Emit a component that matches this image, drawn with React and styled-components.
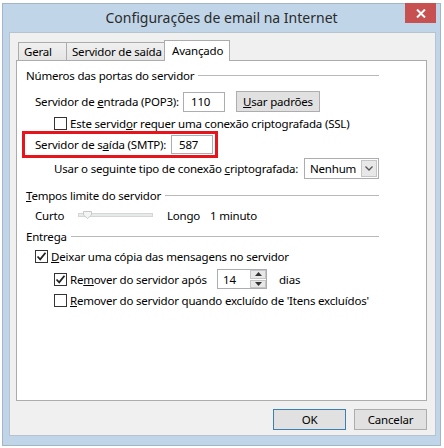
import React from 'react'
import styled, { createGlobalStyle } from 'styled-components'

const GlobalStyle = createGlobalStyle`
  body {
    margin: 0;
    background: #fff;
    font-family: "Noto Sans", "Open Sans", sans-serif;
    font-size: 11.5px;
    letter-spacing: -0.2px;
    color: #000;
  }
`

const Window = styled.div`
  box-sizing: border-box;
  margin: 3px 0 0 2px;
  width: 439px;
  height: 443px;
  background: #c1d5e8;
  border: 1px solid #a3b6c8;
  display: flex;
  flex-direction: column;
`

const TitleBar = styled.div`
  height: 28px;
  display: grid;
  grid-template-columns: 1fr auto 1fr;
  align-items: start;
`

const Title = styled.div`
  grid-column: 2;
  font-size: 14px;
  letter-spacing: 0;
  line-height: 28px;
  color: #2b2b2b;
`

const CloseBtn = styled.div`
  grid-column: 3;
  justify-self: end;
  margin: -1px 4px 0 0;
  width: 31px;
  height: 20px;
  background: #c75050;
  display: flex;
  align-items: center;
  justify-content: center;
`

const Body = styled.div`
  padding: 0 0 0 6px;
`

const Client = styled.div`
  box-sizing: border-box;
  width: 427px;
  height: 404px;
  background: #f0f0f0;
  border: 1px solid #b7c4cf;
  padding: 7px 0 0 6px;
  display: flex;
  flex-direction: column;
`

const TabStrip = styled.div`
  display: flex;
  align-items: flex-end;
  height: 21px;
  margin-bottom: -1px;
  padding-left: 2px;
  position: relative;
  z-index: 1;
`

const Tab = styled.div`
  box-sizing: border-box;
  width: ${(p) => p.$w}px;
  height: ${(p) => (p.$active ? 21 : 19)}px;
  margin-left: ${(p) => (p.$first ? 0 : -1)}px;
  border: 1px solid #acacac;
  border-bottom: ${(p) => (p.$active ? 'none' : '1px solid #acacac')};
  background: ${(p) => (p.$active ? '#fff' : 'linear-gradient(#f0f0f0, #e5e5e5)')};
  padding-left: ${(p) => (p.$active ? 7 : 5)}px;
  line-height: ${(p) => (p.$active ? 20 : 18)}px;
  white-space: nowrap;
`

const Panel = styled.div`
  box-sizing: border-box;
  width: 411px;
  height: 341px;
  background: #fff;
  border: 1px solid #acacac;
  padding: 7px 0 0 9px;
  display: flex;
  flex-direction: column;
`

const Row = styled.div`
  display: flex;
  align-items: center;
  height: ${(p) => p.$h || 14}px;
  margin-top: ${(p) => p.$mt || 0}px;
  padding-left: ${(p) => p.$indent || 0}px;
  width: ${(p) => (p.$full ? '353px' : 'auto')};
  box-sizing: border-box;
  white-space: nowrap;
`

const Header = styled.div`
  display: flex;
  align-items: center;
  width: 353px;
  height: 14px;
  margin-top: ${(p) => p.$mt || 0}px;
  white-space: nowrap;
  &::after {
    content: '';
    flex: 1;
    height: 1px;
    background: #b9b9b9;
    margin-left: 4px;
  }
`

const U = styled.span`
  text-decoration: underline;
`

const Label = styled.span`
  width: ${(p) => p.$w}px;
  flex: none;
`

const TextBox = styled.div`
  box-sizing: border-box;
  width: ${(p) => p.$w}px;
  height: ${(p) => p.$h || 20}px;
  border: 1px solid #abadb3;
  background: #fff;
  padding-left: 7px;
  display: flex;
  align-items: center;
  flex: none;
`

const Button = styled.div`
  box-sizing: border-box;
  width: ${(p) => p.$w}px;
  height: 21px;
  border: 1px solid ${(p) => (p.$default ? '#3c7fb1' : '#adadad')};
  background: #e1e1e1;
  display: flex;
  align-items: center;
  justify-content: center;
  margin-left: ${(p) => p.$ml || 0}px;
`

const Box = styled.span`
  box-sizing: border-box;
  width: 13px;
  height: 13px;
  border: 1px solid #333;
  background: #fff;
  margin-right: 3px;
  flex: none;
  display: flex;
  align-items: center;
  justify-content: center;
`

const RedFrame = styled.div`
  box-sizing: border-box;
  width: 196px;
  height: 27px;
  margin: 1px 0 0 -4px;
  border: 3px solid #e8141c;
  padding: 0 3px 0 10px;
  display: flex;
  align-items: center;
  white-space: nowrap;
`

const Select = styled.div`
  box-sizing: border-box;
  width: 75px;
  height: 21px;
  margin-left: auto;
  border: 1px solid #abadb3;
  background: #fff;
  display: flex;
  align-items: center;
  padding: 0 1px 0 5px;
`

const DropBtn = styled.div`
  box-sizing: border-box;
  margin-left: auto;
  width: 16px;
  height: 17px;
  border: 1px solid #c5c5c5;
  background: #e8e8e8;
  display: flex;
  align-items: center;
  justify-content: center;
`

const Track = styled.div`
  position: relative;
  box-sizing: border-box;
  width: 75px;
  height: 4px;
  margin: 0 14px 0 10px;
  background: #e7eaea;
  border: 1px solid #d6d6d6;
`

const Thumb = styled.svg`
  position: absolute;
  left: 4px;
  top: -3px;
`

const Spin = styled.div`
  box-sizing: border-box;
  width: 50px;
  height: 20px;
  margin: 0 12px 0 0;
  border: 1px solid #abadb3;
  background: #fff;
  display: flex;
  align-items: center;
  padding-left: 5px;
`

const SpinBtns = styled.div`
  margin-left: auto;
  width: 16px;
  height: 18px;
  display: flex;
  flex-direction: column;
  gap: 1px;
`

const SpinBtn = styled.div`
  flex: 1;
  background: #e8e8e8;
  border: 1px solid #c5c5c5;
  display: flex;
  align-items: center;
  justify-content: center;
`

const Footer = styled.div`
  display: flex;
  justify-content: flex-end;
  gap: 8px;
  width: 411px;
  margin-top: 8px;
`

const Check = ({ checked }) => (
  <Box>
    {checked && (
      <svg width="11" height="11" viewBox="0 0 11 11">
        <path d="M1.5 5.5 L4.2 8.3 L9.5 1.8" fill="none" stroke="#222" strokeWidth="1.8" />
      </svg>
    )}
  </Box>
)

const App = () => (
  <>
    <GlobalStyle />
    <Window>
      <TitleBar>
        <Title>Configurações de email na Internet</Title>
        <CloseBtn>
          <svg width="10" height="9" viewBox="0 0 10 9">
            <path d="M1 0.5 L9 8.5 M9 0.5 L1 8.5" stroke="#fff" strokeWidth="2" />
          </svg>
        </CloseBtn>
      </TitleBar>
      <Body>
        <Client>
          <TabStrip>
            <Tab $first $w={49}>Geral</Tab>
            <Tab $w={99}>Servidor de saída</Tab>
            <Tab $active $w={66}>Avançado</Tab>
          </TabStrip>
          <Panel>
            <Header>Números das portas do servidor</Header>
            <Row $h={21} $mt={9} $indent={9}>
              <Label $w={148}>Servidor de <U>e</U>ntrada (POP3):</Label>
              <TextBox $w={42}>110</TextBox>
              <Button $w={84} $ml={11}><span><U>U</U>sar padrões</span></Button>
            </Row>
            <Row $mt={4} $indent={28}>
              <Check />
              <span>Este servid<U>o</U>r requer uma conexão criptografada (SSL)</span>
            </Row>
            <RedFrame>
              <Label $w={136}>Servidor de s<U>a</U>ída (SMTP):</Label>
              <TextBox $w={42} $h={19}>587</TextBox>
            </RedFrame>
            <Row $h={21} $mt={0} $indent={28} $full>
              <span>Usar o seguinte tipo de conexão <U>c</U>riptografada:</span>
              <Select>
                Nenhum
                <DropBtn>
                  <svg width="8" height="5" viewBox="0 0 8 5">
                    <path d="M0.5 0.5 L4 4 L7.5 0.5" fill="none" stroke="#555" strokeWidth="1.3" />
                  </svg>
                </DropBtn>
              </Select>
            </Row>
            <Header $mt={9}><span><U>T</U>empos limite do servidor</span></Header>
            <Row $mt={6} $indent={9}>
              <Label $w={33}>Curto</Label>
              <Track>
                <Thumb width="9" height="8" viewBox="0 0 9 8">
                  <path d="M0.5 0.5 H8.5 V4 L4.5 7.5 L0.5 4 Z" fill="#f4f4f4" stroke="#c9c9c9" />
                </Thumb>
              </Track>
              <Label $w={43}>Longo</Label>
              <span>1 minuto</span>
            </Row>
            <Header $mt={7}>Entrega</Header>
            <Row $mt={6} $indent={9}>
              <Check checked />
              <span><U>D</U>eixar uma cópia das mensagens no servidor</span>
            </Row>
            <Row $h={20} $mt={6} $indent={28}>
              <Check checked />
              <Label $w={147}>Re<U>m</U>over do servidor após</Label>
              <Spin>
                14
                <SpinBtns>
                  <SpinBtn>
                    <svg width="7" height="4" viewBox="0 0 7 4"><path d="M0 4 L3.5 0 L7 4 Z" fill="#333" /></svg>
                  </SpinBtn>
                  <SpinBtn>
                    <svg width="7" height="4" viewBox="0 0 7 4"><path d="M0 0 L3.5 4 L7 0 Z" fill="#333" /></svg>
                  </SpinBtn>
                </SpinBtns>
              </Spin>
              <span>dias</span>
            </Row>
            <Row $mt={4} $indent={28}>
              <Check />
              <span><U>R</U>emover do servidor quando excluído de 'Itens excluídos'</span>
            </Row>
          </Panel>
          <Footer>
            <Button $w={73} $default>OK</Button>
            <Button $w={73}>Cancelar</Button>
          </Footer>
        </Client>
      </Body>
    </Window>
  </>
)

export default App
